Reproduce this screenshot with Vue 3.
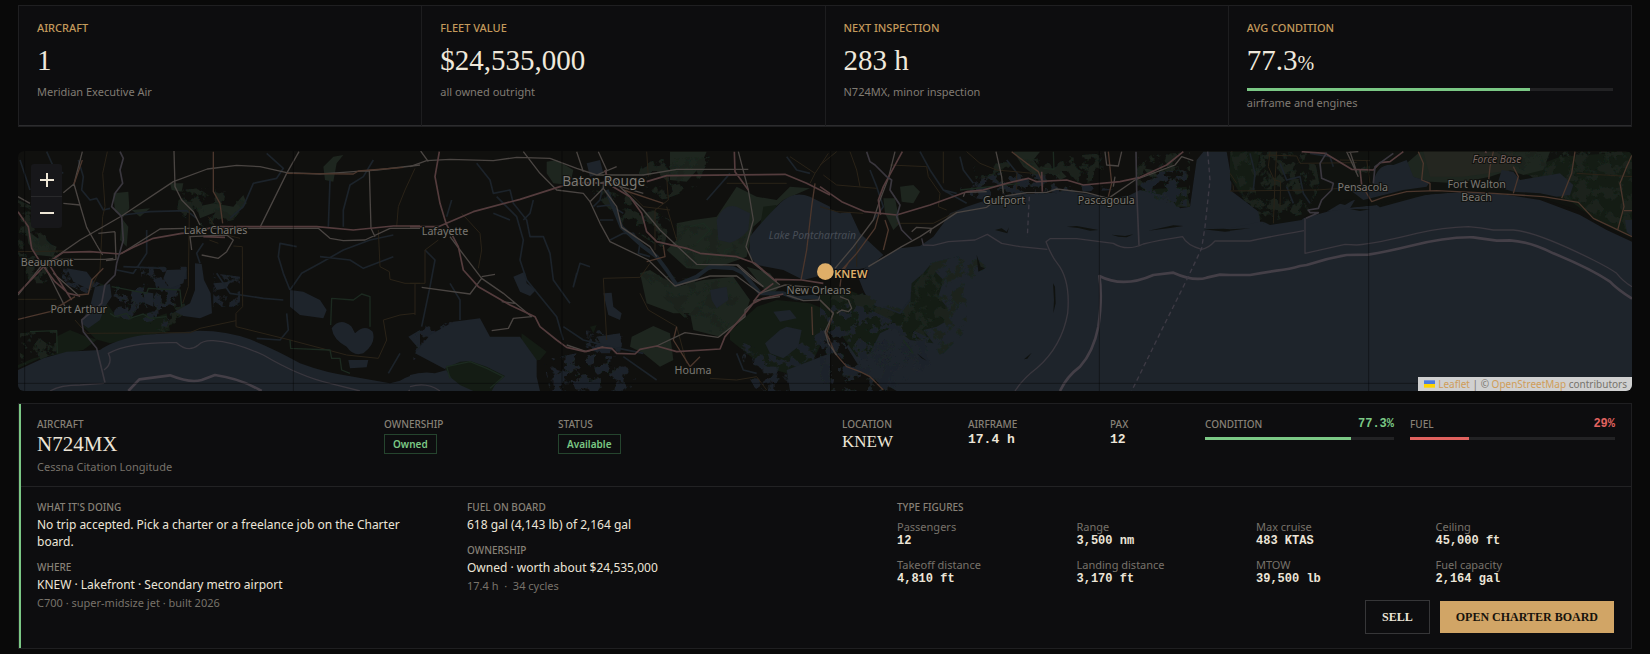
<script setup>
const stats = [
  { label: 'AIRCRAFT', value: '1', note: 'Meridian Executive Air' },
  { label: 'FLEET VALUE', value: '$24,535,000', note: 'all owned outright' },
  { label: 'NEXT INSPECTION', value: '283 h', note: 'N724MX, minor inspection' },
  { label: 'AVG CONDITION', value: '77.3', unit: '%', bar: 77.3, note: 'airframe and engines' },
]
const figures = [
  ['Passengers', '12'],
  ['Range', '3,500 nm'],
  ['Max cruise', '483 KTAS'],
  ['Ceiling', '45,000 ft'],
  ['Takeoff distance', '4,810 ft'],
  ['Landing distance', '3,170 ft'],
  ['MTOW', '39,500 lb'],
  ['Fuel capacity', '2,164 gal'],
]
// Geometry is stored per map sheet; each sheet is 1230 units wide.
const sheets = [
  {
    x: -54,
    shapes: [
      ['wood', 'M54 675 L100 655 L170 640 L168 590 L210 570 L260 590 L330 610 L430 590 L510 572 L500 520 L470 530 L440 520 L400 535 L380 520 L350 530 L320 490 L330 440 L300 430 L285 470 L250 560 L290 600 L250 630 L130 650 L54 685Z'],
      ['park', 'M340 160 L385 155 L388 205 L370 232 L345 215Z M365 235 L385 260 L380 320 L360 300Z M970 80 L1000 50 L1030 45 L1010 70 L1000 125 L975 120Z M80 270 L120 300 L170 320 L160 350 L110 345 L85 310Z M590 200 L640 190 L700 200 L730 165 L740 190 L700 230 L650 215 L600 235Z M510 130 L550 130 L545 155 L515 150Z M395 210 L450 205 L420 230Z'],
      ['marsh', 'M54 180 L120 210 L140 300 L180 340 L150 430 L90 430 L54 340Z M540 150 L650 140 L740 190 L700 240 L610 260 L530 220Z M340 440 L540 445 L560 510 L500 580 L350 520Z M60 580 L170 570 L170 640 L60 680Z'],
      ['marshwater', 'M340 440 L540 445 L500 560 L340 530Z M180 380 L300 430 L260 460 L190 430Z M420 380 L560 380 L560 450 L430 440Z M640 400 L720 410 L720 500 L640 500Z'],
      ['water', 'M54 690 L130 655 L200 635 L300 630 Q340 600 430 585 Q520 578 600 572 Q680 572 750 598 Q830 630 900 670 Q980 700 1060 710 L1170 730 L1200 722 Q1230 705 1260 700 L1260 753 L54 753Z'],
      ['water', 'M285 440 L330 432 L335 470 L315 500 L300 540 L265 565 L242 548 L270 500Z M585 370 L605 372 L612 420 L632 460 L636 520 L600 535 L550 528 L525 515 L570 490 L585 450Z M500 390 L560 388 L550 430 L510 445 L490 415Z M870 450 L910 455 L960 480 L980 510 L970 535 L900 525 L870 500Z M995 565 Q1020 530 1055 560 L1065 580 Q1095 550 1118 575 Q1130 610 1090 640 Q1060 650 1040 620 Q1000 600 995 565Z M1045 660 L1105 660 L1100 682 L1050 685Z M200 385 L260 395 L285 430 L270 450 L220 425Z M430 455 L460 460 L460 500 L435 490Z M1225 590 L1260 570 L1260 630Z M640 430 L690 425 L680 445 L650 450Z'],
      ['river', 'M235 60 L250 110 L245 150 L270 180 L290 175 L310 210 L330 205 M800 40 L850 85 L830 115 L760 130 L730 200 L690 235 M1120 60 L1090 110 L1050 135 L1030 210 L1030 260 M990 120 L985 260 M370 225 L450 215 L560 212 L590 235 M870 450 L905 400 L960 370 L1030 330 L1110 300 L1180 285 M870 450 L850 400 L835 350 L840 310 L890 320 M960 350 L1050 360 L1090 385 L1180 350 M440 270 L440 340 L400 400 L350 390 M860 520 L865 570 L840 600 L770 595 M650 400 L690 460 L790 475 L850 480 M600 370 L590 340 L610 310 M370 380 L490 385 M60 60 L90 150 M140 35 L160 80 L190 100 M1200 640 L1165 700'],
      ['minor', 'M322 35 L308 100 L315 200 L308 230 L300 390 L270 450 M568 210 L565 440 L548 490 M1245 85 L1215 150 L1195 200 L1190 260 M1135 270 L1140 380 L1168 395 L1170 418 L1215 430 L1260 430 M700 318 L727 320 L728 500 L708 520 L708 560 L870 600 L1040 645 L1135 655 L1160 600 L1150 540 L1200 525 L1245 520 M708 542 L600 565 L570 578 L260 580 L225 540 M54 335 L190 333 M54 478 L170 478 M625 230 L660 280 L720 295 M628 300 L655 310'],
      ['shore', 'M335 440 L440 460 L445 445 L540 450 L545 500 M330 520 L345 530 L380 520 L390 535 L430 522 L450 535 L500 530 M992 555 L995 475 L1060 480 L1085 462 L1110 470 L1110 560 M90 575 L170 572 L172 640 M870 600 L872 625 L990 630 L995 655 L1020 655 L1025 690 L1050 700'],
      ['major', 'M247 35 L222 132 L190 158 M222 132 L240 195 L260 262 L290 315 L308 345 M190 190 L240 195 M54 170 L90 190 M165 352 L240 300 L365 228 L520 125 L622 87 L710 76 L780 80 L860 98 L960 102 L1030 97 L1130 90 L1260 75 M522 33 L525 140 L545 180 L580 215 L600 255 M897 35 L860 100 L780 262 M1108 90 L1113 265 L1125 290 M160 358 L315 358 L340 355 M345 275 L295 280 M345 275 L348 358 L318 362 M365 340 L480 267 L560 265 L955 265 L990 295 L1030 302 L1095 300 L1170 265 L1260 265 M575 330 L570 290 L680 285 L700 300 L680 335 L655 355 L605 345 M54 465 L130 370 M130 370 L170 450 L195 500 M160 400 L240 470'],
      ['motor', 'M54 215 L85 260 L95 325 L120 365 L165 425 L205 460 L240 468 M54 460 L140 370 L190 337 L270 335 L360 342 L400 322 L460 295 L545 280 L590 278 L640 260 L950 260 L1060 270 L1180 258 L1260 258 M145 370 L215 480 M610 290 L675 292'],
      ['trunk', 'M640 35 L640 155 L660 190 L668 250 M54 538 L150 515 L225 470 M310 385 L275 420 L265 462 L235 465 M860 100 L1060 102 L1075 93 L1210 82 M247 60 L222 132'],
      ['state', 'M360 35 L370 55 L360 90 L368 130 L345 160 L335 200 L365 230 L370 300 L350 370 L345 405 L315 435 L305 490 L245 540 L250 575 L290 625 L315 728'],
      ['bound', 'M150 753 Q180 735 240 735 L312 730 M312 690 Q340 670 325 640 Q390 605 530 608 Q565 640 595 615 Q610 600 640 602 Q700 605 790 645 Q900 710 990 730 L1080 753 M1225 753 L1260 735'],
      ['limit', 'M385 753 L418 718 L510 706 Q570 730 605 720 L645 705 Q720 715 785 753'],
    ],
  },
  {
    x: 1176,
    shapes: [
      ['park', 'M410 65 L440 60 L490 90 L480 135 L430 130 L410 100Z M780 35 L890 35 L870 80 L830 125 L780 120Z M800 250 L850 240 L920 230 L980 140 L1040 170 L1100 180 L1140 140 L1200 145 L1120 180 L1030 260 L1010 350 L900 390 L830 385 L770 330 L800 300Z M690 400 L720 390 L800 440 L880 420 L970 410 L1020 480 L1000 540 L930 590 L850 570 L840 520 L790 520 L710 490Z M665 590 L730 558 L780 580 L790 660 L750 680 L700 640 L660 620Z M1010 380 L1080 400 L1110 440 L1080 470Z'],
      ['wood', 'M335 580 L410 635 L390 660 L330 665Z M960 575 L1040 500 L1100 480 L1200 490 L1250 510 L1240 600 L1200 680 L1130 700 L1060 680 L1010 640 L960 600Z M1060 200 L1100 195 L1090 230 L1050 260Z M540 560 L560 555 L550 580Z'],
      ['marsh', 'M700 60 L900 50 L860 140 L760 180 L680 120Z M540 150 L640 160 L780 240 L760 330 L640 250Z M690 400 L1000 430 L950 590 L850 560Z M780 250 L1010 280 L980 360 L830 380Z M470 650 L560 640 L640 690 L560 740 L470 720Z'],
      ['marshwater', 'M400 660 L500 640 L620 650 L680 710 L660 753 L420 753Z M980 600 L1100 650 L1260 560 L1260 753 L1040 753 L1010 700Z M20 560 L130 545 L60 640 L10 660Z M530 560 L640 590 L630 640 L520 640Z'],
      ['water', 'M0 705 Q50 690 100 705 L140 745 L0 753Z M15 640 L60 585 L130 545 L210 535 L240 590 L330 590 L380 660 L380 710 L390 753 L0 753 L0 720 L110 690Z M920 240 Q940 190 980 200 L1020 220 L1015 270 Q990 300 960 308 L925 300Z M1020 290 Q1050 250 1110 190 Q1150 150 1200 170 L1260 200 L1260 400 L1180 420 L1120 390 L1040 375 L1018 345Z M580 460 L605 458 L610 500 L635 520 L630 540 L595 525Z M310 410 L345 395 L350 430 L378 450 L360 468 L330 455Z M1065 610 L1110 570 L1130 560 L1175 570 L1165 620 L1120 655 L1080 640Z M900 450 L950 440 L955 480 L920 505 L905 480Z M1090 515 L1140 510 L1160 535 L1110 545Z M1130 690 L1260 640 L1260 753 L1140 753Z M1060 680 L1100 680 L1100 700 L1060 700Z M560 590 L630 580 L635 620 L580 625Z M530 70 L570 60 L580 100 L540 110Z'],
      ['wood', 'M105 685 L150 665 L180 663 L230 680 L285 708 L255 735 L245 753 L190 753 L150 735 L125 715Z'],
      ['river', 'M200 70 L240 120 L250 160 L300 150 L310 190 L350 240 L360 290 L400 290 L420 340 L430 420 L480 490 M260 170 L320 230 L340 300 L330 360 L350 420 L440 530 L460 600 M250 220 L300 240 M560 200 L600 195 L640 220 M570 240 L610 240 M600 300 L640 280 L670 280 L690 310 L685 340 L720 350 M580 130 L570 180 L550 200 M460 560 L520 600 L600 620 L700 640 M370 180 L360 220 L340 240 M500 400 L490 440 L510 370 L540 380 M45 330 L75 360 L60 440 L35 560 M120 430 L150 480 L150 540 M640 650 L740 720 M890 180 L960 100 M1130 50 L1160 90 L1200 100 M980 640 L1000 690 L1040 700 M110 230 L125 180'],
      ['bigriver', 'M590 150 L610 200 L635 262 L700 320 L740 350 L770 390 L800 435 L860 410 L900 380 L970 385 L1000 400 L1050 460 L1120 460 L1160 475 L1210 470 L1240 480'],
      ['minor', 'M0 430 L45 430 L45 330 L85 300 M155 220 L210 280 L215 330 L205 385 M15 430 L15 525 M580 415 L690 412 L720 370 M580 415 L590 600 M690 460 L715 510 L800 560 L830 670 M770 110 L775 180 L735 210 L735 330 M710 35 L715 110 M950 130 L1130 130 M1140 50 L1215 100 L1255 40 M640 140 L700 200 L780 210 M900 715 L980 720 L1040 710 L1070 750 M1215 100 L1200 130 M770 200 L800 300'],
      ['shore', 'M840 260 L880 250 L900 270 L860 310 M890 370 L895 345 L940 350 L945 330 L960 325 M240 745 L280 710 L230 685 L180 665 L110 680 L120 715'],
      ['trunk', 'M1215 130 L1205 200 L1190 330 L1173 420 M760 315 L765 350 L710 365 M640 150 L760 190 M800 560 L790 600 L840 680 M1205 500 L1208 585 M870 650 L840 680'],
      ['major', 'M0 80 L50 62 L120 58 L250 62 L320 52 L420 55 L500 85 L560 105 L700 105 L800 88 L1015 88 M32 33 L55 65 M340 35 L390 100 L440 150 L520 160 L540 185 L570 250 L600 305 L715 360 L795 438 L900 408 L980 408 L1050 460 L1125 435 M560 105 L620 80 M500 35 L515 80 L520 95 M565 35 L590 90 L580 145 L540 185 M580 145 L620 200 L635 262 L720 320 L740 350 M610 120 L700 210 L750 270 L860 373 L985 375 L1060 440 M985 35 L1015 150 L1030 240 L1008 320 L1030 370 L1110 435 M120 290 L150 330 L215 415 L180 462 L35 442 M215 415 L280 460 L365 530 L310 535 L295 565 L245 572 M215 410 L255 403 M315 490 L275 485 M470 615 L530 635 L580 620 M740 618 L825 578 L925 592 M925 592 L1005 530 L1005 510 L1040 480 L1110 470 M1240 475 L1260 520 L1245 580 L1260 600'],
      ['motor', 'M0 260 L85 260 L190 215 L330 178 L450 140 L520 128 L600 130 M88 35 L75 110 L90 190 L108 250 L145 320 L160 390 L205 440 L300 495 L375 530 L390 560 L440 600 L470 622 L525 635 L575 622 L605 625 L620 640 L675 642 L690 628 L740 618 L800 635 L930 627 L945 590 L1005 520 L1030 490 L1060 475 L1120 462 M585 90 L600 135 L660 170 L695 220 L710 275 L740 305 L830 325 L870 340 L980 350 L1035 370 L1100 425 M710 125 L770 107 L1125 103 L1190 130 L1260 165 M973 35 L975 95 L1015 150 M1095 418 L1175 420 L1240 430 M1030 485 L1050 460 L1090 430'],
      ['major', 'M600 130 L700 160 M620 120 L560 130 M980 375 L1030 420 L1060 440 M1125 435 L1240 445 M1130 465 L1180 482 L1225 480 L1240 445'],
      ['bound', 'M0 740 Q50 725 90 753'],
    ],
  },
  {
    x: 2406,
    shapes: [
      ['water', 'M0 195 L60 220 L90 215 L120 280 L190 345 L150 380 L60 400 L0 400Z'],
      ['water', 'M110 400 L190 350 L240 325 L300 318 L340 290 L370 250 L390 220 L440 200 L500 180 L560 165 L680 160 L740 152 L880 175 L930 165 L960 150 L1050 160 L1080 205 L1110 200 L1120 130 L1130 60 L1150 35 L1220 35 L1235 120 L1230 220 L1260 270 L1260 753 L230 753 L190 730 L130 700 L80 620 L120 560 L160 510 L130 450Z'],
      ['wood', 'M60 440 L110 460 L170 500 L250 520 L270 500 L275 430 L310 400 L330 375 L350 400 L370 420 L355 470 L380 500 L385 540 L350 560 L310 570 L340 610 L270 600 L220 560 L180 580 L150 640 L110 650 L60 580 L0 560 L0 450Z M960 150 L1100 140 L1110 200 L1070 200 L1050 170Z'],
      ['park', 'M240 140 L280 135 L300 155 L280 190 L245 185Z M190 175 L225 175 L240 250 L220 270 L195 220Z M580 35 L660 35 L640 60 L665 95 L650 110 L610 80Z M700 100 L720 90 L740 110 L720 120Z M970 85 L1000 90 L1015 110 L990 110Z'],
      ['marsh', 'M0 470 L130 460 L250 510 L280 440 L330 370 L450 340 L500 380 L440 430 L440 570 L370 640 L310 660 L210 680 L160 700 L40 660Z M460 80 L600 60 L850 40 L850 140 L730 145 L530 160 L470 130Z M950 50 L1110 35 L1110 200 L1060 200 L950 150Z M0 620 L200 640 L200 753 L0 753Z'],
      ['marshwater', 'M0 480 L130 500 L340 600 L330 680 L200 753 L0 753Z M370 160 L560 90 L700 110 L880 150 L700 160 L500 180Z M970 100 L1100 90 L1100 200 L960 150Z'],
      ['river', 'M300 35 L330 90 L370 150 L440 190 M420 50 L430 90 L460 130 M560 60 L600 110 M150 90 L170 140 L190 200 L160 240 M190 500 L240 520 L270 480 M370 150 L410 160'],
      ['minor', 'M10 105 L50 135 L170 145 M90 35 L110 90 L120 140 M210 75 L320 80 L325 110 L360 160 L355 200 L380 210 M370 35 L370 130 M440 35 L480 70 L530 90 L640 100 M590 100 L590 150 M0 75 L50 35 M0 200 L50 215 L130 220 M230 250 L340 250 L410 215 M110 300 L110 380 M1235 35 L1240 150'],
      ['shore', 'M420 150 L600 130 M700 35 L702 88 L670 85 M280 640 L250 600'],
      ['isle', 'M525 270 L545 265 L560 275 L567 262 L562 280 L545 275Z M740 260 L770 258 L835 270 L810 272 L775 264Z M875 284 L915 288 L940 283 L920 292 L895 290Z M985 272 L1060 256 L1090 258 L1050 264Z M1150 268 L1210 266 L1260 270 L1215 275Z M699 430 L705 440 L707 490 L700 520 L702 480Z M612 658 L635 638 L622 656Z M290 640 L320 662 L305 655Z M470 345 L482 380 L495 385 L475 395Z'],
      ['trunk', 'M195 240 L205 270 L190 330 M575 35 L620 70 L655 95 L665 120 M865 35 L875 130 L865 170 M0 480 L40 520 L20 580 L45 640 L80 680 L120 695 L150 710 L190 750 M1235 35 L1240 90 M90 360 L65 400 L60 440 M180 210 L165 265 L110 340 L65 390'],
      ['major', 'M225 35 L205 115 L178 185 L160 240 L100 320 L45 385 M145 380 L245 320 L300 290 L410 218 L500 202 L540 170 L620 158 L680 157 L710 147 L800 158 L865 175 L945 120 L1065 75 L1085 50 L1120 62 M528 35 L545 110 L550 160 M855 35 L860 75 L895 78 L905 35 M880 140 L885 110 M275 275 L290 262 L335 265 L330 280 M430 170 L435 157 L500 155 M0 480 L40 520 L15 575 L25 610 L50 645 M60 470 L85 480 L95 505 L85 515 L65 510 L50 520'],
      ['motor', 'M0 140 L65 185 L135 215 L230 225 L330 195 L440 155 L490 150 L560 130 L625 115 L650 125 L740 120 L790 135 L900 125 L960 112 L1040 75 L1090 35 M247 35 L190 140 L175 180 L182 225 M665 95 L667 155'],
      ['state', 'M140 35 L150 65 L165 75 L200 110 L215 120 L210 150 L240 195 L230 230 L245 270 L275 300 M948 35 L950 150 L957 315'],
      ['bound', 'M305 295 L310 315 L340 316 L385 305 L465 300 L502 283 L545 310 L600 320 L682 328 M585 753 Q610 715 650 685 Q725 620 743 520 Q752 420 712 370 Q695 350 678 305 L690 296 L770 296 L880 310 Q920 335 970 312 Q1010 302 1088 290 Q1100 315 1145 328 Q1165 325 1185 303 L1230 303'],
      ['limit', 'M720 753 Q740 710 780 680 Q820 635 835 560 Q848 470 838 408 Q910 445 1000 405 L1060 398 Q1120 425 1160 413 L1200 404 L1230 405'],
      ['ferry', 'M1163 35 L1170 120 L1155 260 L1145 325 L1100 420 L1030 560 L935 753 M628 170 L622 290'],
    ],
  },
  {
    x: 3636,
    shapes: [
      ['water', 'M0 160 L50 190 L90 210 L90 245 L200 240 L330 205 L440 195 L560 165 L700 155 L800 160 L930 180 L1050 225 L1130 270 L1206 305 L1206 753 L0 753Z'],
      ['land', 'M0 35 L1206 35 L1206 300 L1100 245 L1060 215 L950 180 L830 162 L700 155 L580 165 L440 195 L240 215 L215 240 L120 255 L90 240 L85 215 L40 180 L0 120Z'],
      ['wood', 'M960 160 L1000 120 L1050 110 L1206 120 L1206 290 L1100 240 L1030 190Z M0 35 L90 35 L70 150 L30 160 L0 110Z M860 100 L990 50 L1206 35 L1206 140 L1000 120Z'],
      ['park', 'M530 70 L570 35 L960 35 L940 90 L880 105 L840 90 L780 110 L680 130 L600 125 L545 110Z'],
      ['field', 'M580 35 L850 35 L850 90 L700 110 L600 110Z'],
      ['marsh', 'M0 35 L250 35 L270 140 L230 220 L100 250 L40 180Z M800 35 L1206 35 L1206 280 L1050 200 L960 150Z M370 100 L420 70 L420 160 L390 170Z'],
      ['water', 'M430 130 Q440 70 490 75 L530 60 L550 110 L600 125 L590 140 L520 150 L440 170 L400 180 L360 150 L440 145Z M0 150 L40 180 L85 215 L90 245 L0 265Z M815 90 L850 95 L870 120 L960 105 L990 100 L1030 135 L1020 165 L980 170 L930 160 L850 155 L800 140Z M1185 240 L1206 240 L1206 290 L1190 275Z M340 185 L375 180 L360 205 L290 215Z'],
      ['isle', 'M440 195 L560 165 L620 157 L560 172 L450 202Z M325 190 L345 178 L370 180 L345 195Z M0 268 L60 265 L0 272Z M360 207 L420 208 L390 213Z'],
      ['river', 'M150 70 L170 120 L210 110 L220 160 L240 190 M240 40 L300 50 L310 80 M170 140 L190 190 M60 40 L75 100 L70 150'],
      ['minor', 'M120 35 L115 80 L135 125 L130 250 M140 35 L135 120 L152 125 L150 200 M0 153 L260 150 L330 145 M110 45 L200 48 L210 70 L380 68 M330 60 L420 62 M420 130 L410 60 M1040 100 L1206 110 M0 100 L20 130'],
      ['major', 'M350 35 L385 110 M360 35 L380 95 M355 37 L385 35'],
      ['motor', 'M215 35 L285 40 L365 88 L430 90 L450 68 L480 65 L520 35 M390 88 L395 135 M765 35 L770 38'],
      ['trunk', 'M395 135 L425 185 L460 172 L530 155 L620 152 L790 160 L940 170 L1045 187 L1090 235 L1160 268 L1206 290 M565 35 L580 70 L575 120 L600 130 L600 152 M790 35 L780 80 L775 130 M850 80 L865 110 L850 160 M1035 35 L1025 100 L995 175 M1206 45 L1190 80 L1170 130 L1182 200 L1163 270 M1182 212 L1206 212'],
      ['state', 'M290 38 L270 70 L275 115 L310 130 L305 150 L275 180 L265 205 L235 210 L240 218 L265 218 L228 235 M490 40 L435 80 L430 130'],
      ['bound', 'M0 303 L60 303 Q120 290 222 272 M225 235 L225 340 L345 313 L380 315 Q440 310 560 280 Q640 262 715 260 Q750 262 790 270 L850 270 Q920 275 1090 360 Q1140 385 1160 400 Q1180 425 1206 440'],
      ['limit', 'M0 405 L60 405 Q100 397 140 392 Q180 387 210 378 L230 375 Q290 355 350 345 L415 344 Q470 335 540 318 Q650 290 730 292 L800 302 L840 301 Q900 305 970 340 Q1080 385 1140 425 Q1160 447 1206 476'],
    ],
  },
]
const seams = [20, 826, 1632, 2438, 3244, 4052]
const places = [
  { t: 'Lake Charles', x: 593, y: 249, s: 32 },
  { t: 'Beaumont', x: 87, y: 345, s: 32 },
  { t: 'Port Arthur', x: 182, y: 485, s: 32 },
  { t: 'Lafayette', x: 1281, y: 251, s: 32 },
  { t: 'Baton Rouge', x: 1757, y: 106, s: 41 },
  { t: 'Lake Pontchartrain', x: 2383, y: 264, s: 31, c: 'lake' },
  { t: 'New Orleans', x: 2402, y: 429, s: 32 },
  { t: 'Houma', x: 2025, y: 668, s: 32 },
  { t: 'Gulfport', x: 2958, y: 159, s: 32 },
  { t: 'Pascagoula', x: 3265, y: 159, s: 32 },
  { t: 'Pensacola', x: 4034, y: 120, s: 32 },
  { t: 'Force Base', x: 4437, y: 36, s: 31, c: 'base' },
  { t: 'Fort Walton', x: 4376, y: 111, s: 32 },
  { t: 'Beach', x: 4376, y: 151, s: 32 },
]
</script>

<template>
  <main class="page">
    <section class="stats">
      <article v-for="s in stats" :key="s.label" class="stat">
        <h2 class="stat-label">{{ s.label }}</h2>
        <div class="stat-value">{{ s.value }}<span v-if="s.unit" class="unit">{{ s.unit }}</span></div>
        <div v-if="s.bar" class="track stat-track"><div class="fill good" :style="{ width: s.bar + '%' }"></div></div>
        <p class="stat-note" :class="{ tight: s.bar }">{{ s.note }}</p>
      </article>
    </section>

    <section class="map" aria-label="Fleet map">
      <svg class="chart" viewBox="0 0 4842 720" preserveAspectRatio="xMidYMid slice">
        <defs>
          <filter id="speckle" x="0" y="0" width="100%" height="100%">
            <feTurbulence type="fractalNoise" baseFrequency="0.028" numOctaves="5" seed="7" />
            <feColorMatrix values="0 0 0 0 0  0 0 0 0 0  0 0 0 0 0  12 0 0 0 -6" />
            <feComposite in="SourceGraphic" operator="in" />
          </filter>
        </defs>
        <g v-for="sheet in sheets" :key="sheet.x" :transform="`translate(${sheet.x} -33)`">
          <path v-for="(p, i) in sheet.shapes" :key="i" :class="p[0]" :d="p[1]" />
        </g>
        <path v-for="x in seams" :key="x" class="seam" :d="`M${x} 0V720`" />
        <path class="seam" d="M0 697H4842" />
        <text v-for="p in places" :key="p.t" class="place" :class="p.c" :x="p.x" :y="p.y" :font-size="p.s">{{ p.t }}</text>
        <circle cx="2422" cy="362" r="25" class="pin" />
        <text x="2448" y="381" font-size="34" class="pin-label">KNEW</text>
      </svg>
      <div class="zoom">
        <button type="button" aria-label="Zoom in"><svg viewBox="0 0 14 14"><path d="M7 0V14M0 7H14" /></svg></button>
        <button type="button" aria-label="Zoom out"><svg viewBox="0 0 14 14"><path d="M0 7H14" /></svg></button>
      </div>
      <div class="credit">
        <svg viewBox="0 0 12 8" class="flag"><path fill="#4c7be1" d="M0 0h12v4H0z" /><path fill="#ffd500" d="M0 4h12v4H0z" /></svg>
        <span><a href="#">Leaflet</a> | © <a href="#">OpenStreetMap</a> contributors</span>
      </div>
    </section>

    <article class="plane">
      <header class="head">
        <div>
          <h3 class="label">AIRCRAFT</h3>
          <div class="tail">N724MX</div>
          <p class="muted">Cessna Citation Longitude</p>
        </div>
        <div><h3 class="label">OWNERSHIP</h3><span class="pill">Owned</span></div>
        <div><h3 class="label">STATUS</h3><span class="pill">Available</span></div>
        <div><h3 class="label">LOCATION</h3><div class="port">KNEW</div></div>
        <div><h3 class="label">AIRFRAME</h3><div class="num">17.4 h</div></div>
        <div><h3 class="label">PAX</h3><div class="num">12</div></div>
        <div>
          <div class="gauge"><h3 class="label">CONDITION</h3><span class="pct green">77.3%</span></div>
          <div class="track"><div class="fill good" :style="{ width: '77.3%' }"></div></div>
        </div>
        <div>
          <div class="gauge"><h3 class="label">FUEL</h3><span class="pct red">29%</span></div>
          <div class="track"><div class="fill low" :style="{ width: '28.6%' }"></div></div>
        </div>
      </header>
      <div class="body">
        <div class="col">
          <div>
            <h3 class="label">WHAT IT'S DOING</h3>
            <p class="text">No trip accepted. Pick a charter or a freelance job on the Charter board.</p>
          </div>
          <div>
            <h3 class="label">WHERE</h3>
            <p class="text">KNEW · Lakefront · Secondary metro airport</p>
            <p class="muted">C700 · super-midsize jet · built 2026</p>
          </div>
        </div>
        <div class="col">
          <div>
            <h3 class="label">FUEL ON BOARD</h3>
            <p class="text">618 gal (4,143 lb) of 2,164 gal</p>
          </div>
          <div>
            <h3 class="label">OWNERSHIP</h3>
            <p class="text">Owned · worth about $24,535,000</p>
            <p class="muted">17.4 h &nbsp;·&nbsp; 34 cycles</p>
          </div>
        </div>
        <div>
          <h3 class="label">TYPE FIGURES</h3>
          <dl class="figures">
            <div v-for="f in figures" :key="f[0]"><dt>{{ f[0] }}</dt><dd>{{ f[1] }}</dd></div>
          </dl>
          <div class="actions">
            <button type="button" class="btn">SELL</button>
            <button type="button" class="btn primary">OPEN CHARTER BOARD</button>
          </div>
        </div>
      </div>
    </article>
  </main>
</template>

<style>
body { background: #090909; }
</style>

<style scoped>
* { box-sizing: border-box; margin: 0; }
.page { padding: 5px 18px; font: 12px/17px "Noto Sans", sans-serif; color: #ece5d8; }
.stats { display: grid; grid-template-columns: repeat(4, 1fr); gap: 1px; border: 1px solid #1f1f21; background: #1d1d1f; }
.stat { background: #0d0d0f; padding: 15px 18px 14px; border-bottom: 1px solid #2c2c2e; }
.stat-label { font-size: 11px; line-height: 14px; font-weight: 500; color: #c49a5c; }
.stat-value { margin-top: 8px; font: 29px/34px "Liberation Serif", serif; color: #efe8db; }
.unit { font-size: 20px; line-height: 20px; }
.stat-note { margin-top: 7px; font-size: 11px; line-height: 16px; color: #807b73; }
.stat-note.tight { margin-top: 4px; }
.track { height: 3px; background: #222224; margin-top: 6px; }
.stat-track { margin-top: 11px; }
.fill { height: 3px; }
.good { background: #7bc885; }
.low { background: #e0625f; }

.map { position: relative; height: 240px; margin-top: 24px; border-radius: 6px; overflow: hidden; background: #10100e; }
.chart { display: block; width: 100%; height: 100%; }
.chart path { fill: none; stroke-linejoin: round; }
.chart .water { fill: #1e242b; }
.chart .land, .chart .isle { fill: #10120f; }
.chart .wood { fill: #141c14; }
.chart .park { fill: #1e261f; }
.chart .field { fill: #242620; }
.chart .marsh { fill: #1a241d; filter: url(#speckle); }
.chart .marshwater { fill: #1e242b; filter: url(#speckle); }
.chart .river { stroke: #1c232a; stroke-width: 5; }
.chart .bigriver { stroke: #1d252c; stroke-width: 12; }
.chart .minor { stroke: #2a2318; stroke-width: 3; }
.chart .shore { stroke: #1c2a20; stroke-width: 4; }
.chart .major { stroke: #4a4542; stroke-width: 4; }
.chart .motor { stroke: #543c3d; stroke-width: 5; }
.chart .trunk { stroke: #4c372d; stroke-width: 4; }
.chart .state { stroke: #3a373e; stroke-width: 5; }
.chart .bound { stroke: #3a373e; stroke-width: 4; }
.chart .limit { stroke: #443f47; stroke-width: 8; }
.chart .ferry { stroke: #3d3a44; stroke-width: 4; stroke-dasharray: 14 10; }
.chart .seam { stroke: #000; stroke-opacity: 0.4; stroke-width: 3; }
.place { fill: #7b7873; text-anchor: middle; stroke: #11120f; stroke-width: 6; paint-order: stroke; }
.place.lake { fill: #474d56; stroke: none; font-style: italic; }
.place.base { fill: #7a6661; font-style: italic; }
.pin { fill: #dfae68; }
.pin-label { fill: #dcae6a; font-weight: 600; stroke: #0d0d0f; stroke-width: 6; paint-order: stroke; }
.zoom { position: absolute; left: 13px; top: 13px; width: 31px; border-radius: 3px; overflow: hidden; background: #17171a; }
.zoom button { display: flex; align-items: center; justify-content: center; width: 31px; height: 32px; padding: 0; border: 0; background: none; }
.zoom button + button { border-top: 1px solid #29292b; }
.zoom svg { width: 14px; height: 14px; }
.zoom path { stroke: #eee6d6; stroke-width: 2; }
.credit { position: absolute; right: 0; bottom: 0; display: flex; align-items: center; gap: 3px; height: 14px; padding: 0 5px 0 6px; font-size: 10px; line-height: 14px; color: #77736c; background: #d0d0d0; }
.credit a { color: #cf9d58; text-decoration: none; }
.flag { width: 11px; height: 8px; }

.plane { margin-top: 12px; padding-left: 2px; border: 1px solid #1f1f21; background: linear-gradient(#7bc885, #7bc885) 0 0 / 2px 100% no-repeat #0d0d0f; }
.head { display: grid; grid-template-columns: 331fr 158fr 268fr 110fr 126fr 79fr 189fr 205fr; gap: 16px; padding: 13px 16px 11px; border-bottom: 1px solid #222224; }
.label { font-size: 10px; line-height: 14px; font-weight: 500; color: #878177; }
.tail { font: 21px/27px "Liberation Serif", serif; }
.muted { margin-top: 1px; font-size: 11px; line-height: 17px; color: #77726a; }
.head .muted { margin: 0; }
.pill { display: inline-block; margin-top: 3px; padding: 0 8px; border: 1px solid #25442e; font-size: 10px; line-height: 18px; font-weight: 600; color: #7bc885; }
.port { font: 17px/22px "Liberation Serif", serif; }
.num { font: bold 13px/17px "Liberation Mono", monospace; }
.gauge { display: flex; justify-content: space-between; }
.pct { font: bold 12px/14px "Liberation Mono", monospace; }
.green { color: #7bc885; }
.red { color: #e0625f; }
.body { display: grid; grid-template-columns: 402fr 402fr 718fr; gap: 28px; padding: 13px 16px 14px; }
.col { display: flex; flex-direction: column; gap: 10px; }
.text { margin-top: 2px; }
.figures { display: grid; grid-template-columns: repeat(4, 1fr); row-gap: 9px; margin-top: 6px; }
.figures dt { font-size: 11px; line-height: 14px; color: #77726a; }
.figures dd { font: bold 12px/15px "Liberation Mono", monospace; }
.actions { display: flex; justify-content: flex-end; gap: 9px; margin-top: 13px; }
.btn { height: 34px; padding: 0 16px; border: 1px solid #363638; background: transparent; color: #ece5d8; font: bold 12px/16px "Liberation Serif", serif; }
.primary { border-color: #0d0d0f; background: #d1a566; color: #17130c; }
</style>
